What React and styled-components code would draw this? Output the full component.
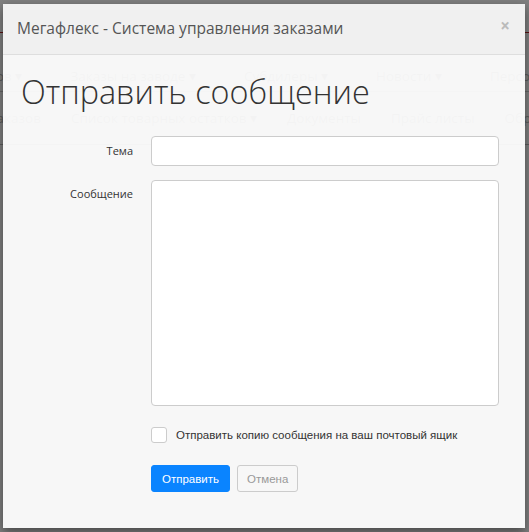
import React from "react";
import styled, { createGlobalStyle } from "styled-components";

const GlobalStyle = createGlobalStyle`
  html, body {
    margin: 0;
    padding: 0;
    background: #ffffff;
    font-family: "Open Sans", "Liberation Sans", sans-serif;
  }
  * { box-sizing: border-box; }
`;

const Page = styled.div`
  position: relative;
  width: 529px;
  height: 532px;
  overflow: hidden;
  background: #ffffff;
`;

// page behind the modal
const TopBar = styled.div`
  height: 33px;
  background: #ffffff;
  border-bottom: 1px solid #b22222;
`;

const NavRow = styled.div`
  display: flex;
  align-items: flex-end;
  height: 59px;
  padding-bottom: 6px;
  border-bottom: 1px solid #cccccc;
  margin-left: -4px;
  gap: 48px;
  white-space: nowrap;
`;

const SubRow = styled.div`
  display: flex;
  align-items: center;
  height: 53px;
  margin-left: -10px;
  gap: 30px;
  white-space: nowrap;
  border-bottom: 1px solid #bbbbbb;
`;

const NavItem = styled.span`
  font-size: 13.5px;
  color: #b5b5b5;
`;

const Modal = styled.div`
  position: absolute;
  left: 3px;
  top: 4px;
  width: 522px;
  height: 524px;
  display: flex;
  flex-direction: column;
  box-shadow: 0 0 0 800px rgba(0, 0, 0, 0.5), 0 4px 10px rgba(0, 0, 0, 0.45);
`;

const Header = styled.div`
  display: flex;
  align-items: center;
  justify-content: space-between;
  height: 51px;
  padding: 0 15px 2px 14px;
  background: #f0f0f0;
  border-bottom: 1px solid #dedede;
`;

const HeaderTitle = styled.div`
  font-size: 15.5px;
  color: #555555;
`;

const Close = styled.span`
  font-size: 17px;
  font-weight: 700;
  color: #bbbbbb;
  margin-top: -6px;
  line-height: 1;
`;

const Body = styled.div`
  flex: 1;
  padding: 14px 27px 0 18px;
  background: rgba(247, 247, 247, 0.95);
`;

const Title = styled.h1`
  margin: 0 0 22px 0;
  font-size: 32.4px;
  font-weight: 300;
  line-height: 45px;
  color: #333333;
`;

const FormRow = styled.div`
  display: grid;
  grid-template-columns: 112px 1fr;
  column-gap: 18px;
  margin-bottom: ${(p) => p.gap || 14}px;
`;

const Label = styled.label`
  text-align: right;
  font-size: 11px;
  color: #333333;
  padding-top: ${(p) => p.top || 7}px;
`;

const Input = styled.input`
  height: 30px;
  width: 348px;
  border: 1px solid #cccccc;
  border-radius: 4px;
  background: #ffffff;
`;

const TextArea = styled.textarea`
  display: block;
  height: 226px;
  width: 348px;
  border: 1px solid #cccccc;
  border-radius: 4px;
  background: #ffffff;
  resize: none;
`;

const CheckRow = styled.div`
  display: flex;
  align-items: center;
  height: 16px;
  gap: 9px;
  margin: 0 0 22px 130px;
`;

const CheckBox = styled.span`
  width: 16px;
  height: 16px;
  border: 1px solid #cccccc;
  border-radius: 3px;
  background: #ffffff;
`;

const CheckText = styled.span`
  font-family: "Liberation Sans", Arial, sans-serif;
  font-size: 11.5px;
  color: #333333;
`;

const Buttons = styled.div`
  display: flex;
  gap: 7px;
  margin-left: 130px;
`;

const Button = styled.button`
  height: 27px;
  padding: 0 ${(p) => (p.primary ? 10 : 9)}px;
  font-family: "Liberation Sans", Arial, sans-serif;
  font-size: 11.5px;
  border-radius: 3px;
  border: 1px solid ${(p) => (p.primary ? "#0a84ff" : "#cccccc")};
  background: ${(p) => (p.primary ? "#0a84ff" : "transparent")};
  color: ${(p) => (p.primary ? "#ffffff" : "#999999")};
`;

export default function App() {
  return (
    <>
      <GlobalStyle />
      <Page>
        <TopBar />
        <NavRow>
          <NavItem>ов ▾</NavItem>
          <NavItem>Заказы на заводе ▾</NavItem>
          <NavItem>Субдилеры ▾</NavItem>
          <NavItem>Новости ▾</NavItem>
          <NavItem>Персональные</NavItem>
        </NavRow>
        <SubRow>
          <NavItem>заказов</NavItem>
          <NavItem>Список товарных остатков ▾</NavItem>
          <NavItem>Документы</NavItem>
          <NavItem>Прайс листы</NavItem>
          <NavItem>Обратная связь</NavItem>
        </SubRow>
        <Modal>
          <Header>
            <HeaderTitle>Мегафлекс - Система управления заказами</HeaderTitle>
            <Close>×</Close>
          </Header>
          <Body>
            <Title>Отправить сообщение</Title>
            <FormRow>
              <Label>Тема</Label>
              <Input />
            </FormRow>
            <FormRow gap={21}>
              <Label top={6}>Сообщение</Label>
              <TextArea />
            </FormRow>
            <CheckRow>
              <CheckBox />
              <CheckText>Отправить копию сообщения на ваш почтовый ящик</CheckText>
            </CheckRow>
            <Buttons>
              <Button primary>Отправить</Button>
              <Button>Отмена</Button>
            </Buttons>
          </Body>
        </Modal>
      </Page>
    </>
  );
}
